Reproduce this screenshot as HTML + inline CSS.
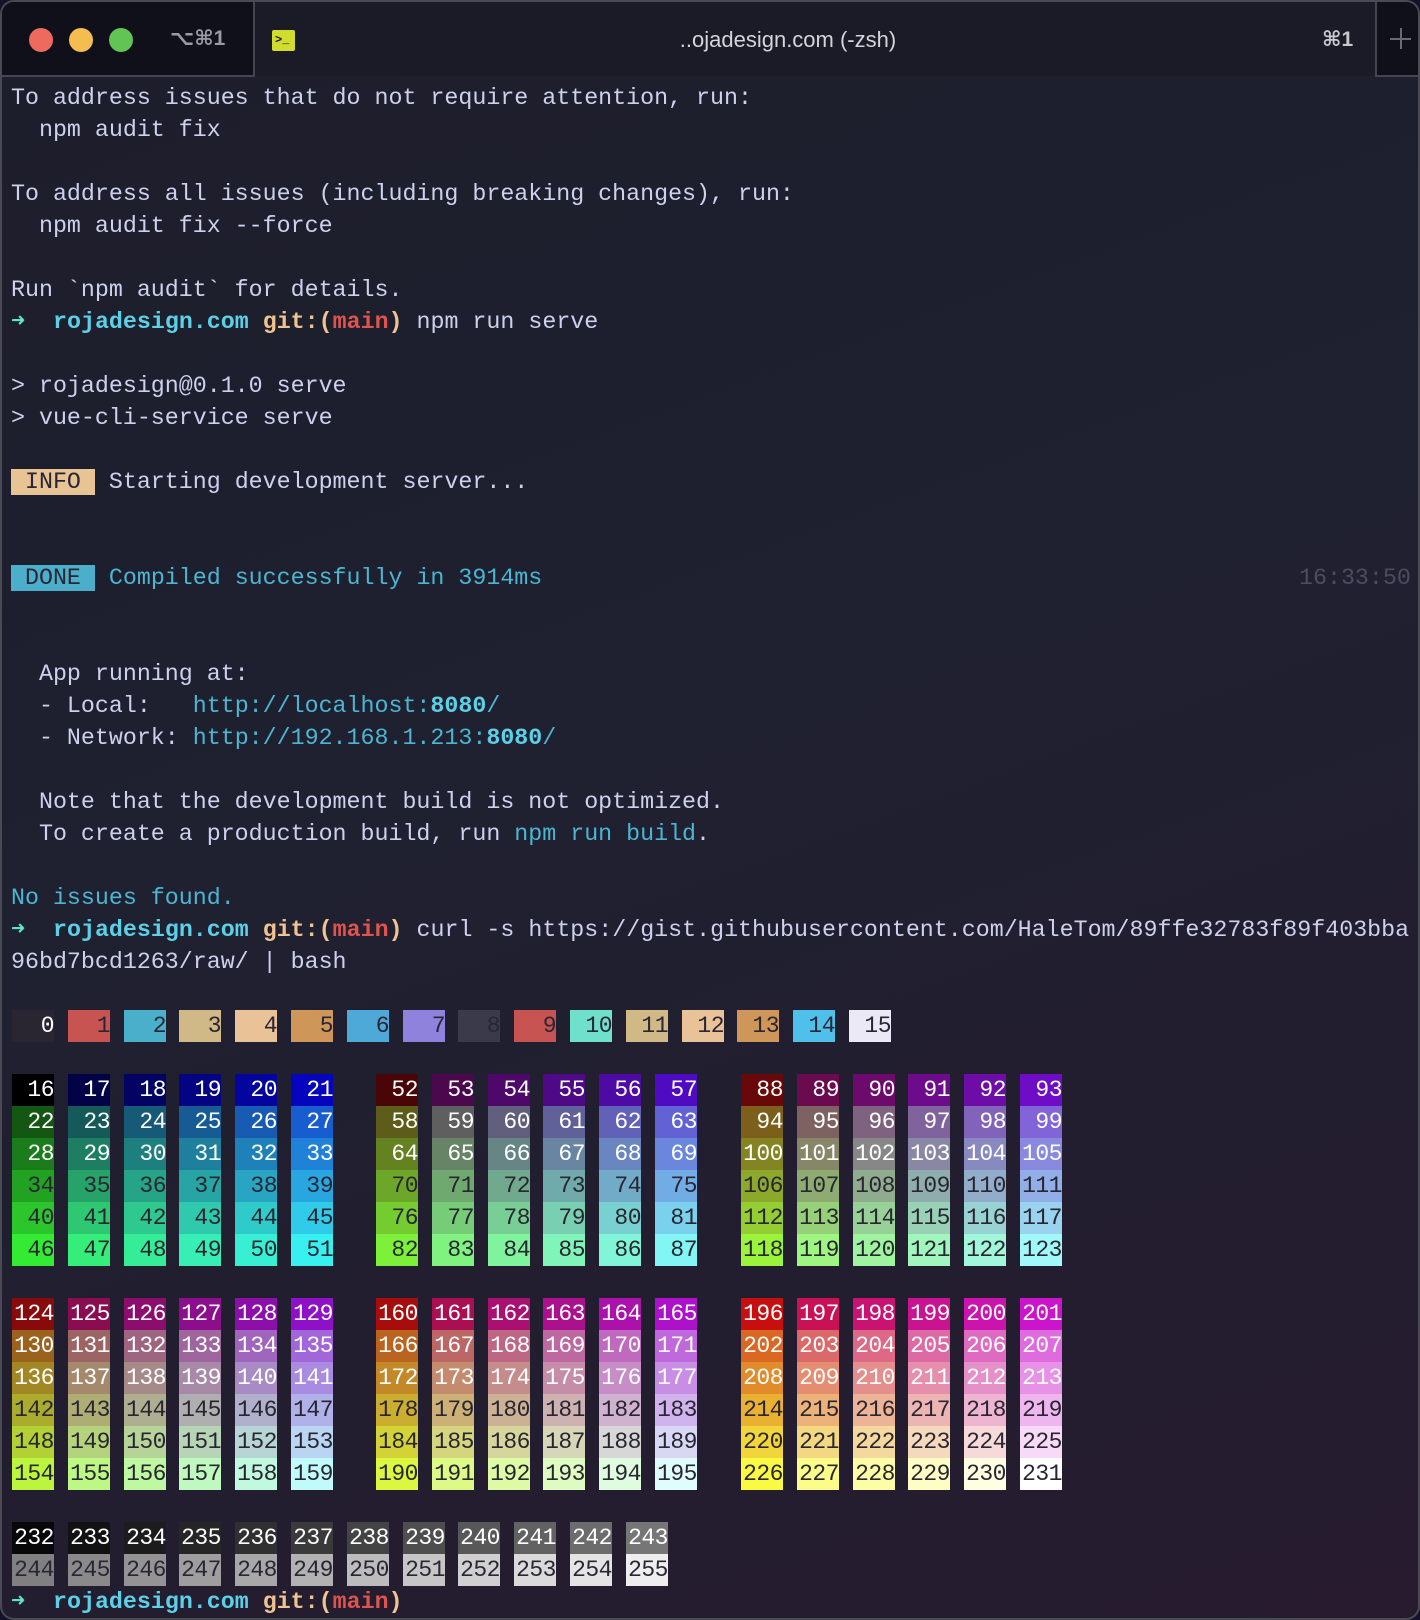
<!DOCTYPE html>
<html><head><meta charset="utf-8"><style>
*{margin:0;padding:0;box-sizing:border-box}
html,body{width:1420px;height:1620px;overflow:hidden;background:#14122a}
#win{position:absolute;left:0;top:0;width:1420px;height:1620px;border-radius:14px;overflow:hidden;
background:linear-gradient(160deg,#1d1e2b 0%,#1f2030 45%,#231d2f 80%,#281b2f 100%);border:2px solid #4a4a54}
#bar{position:absolute;left:0;top:0;width:1420px;height:74px;background:#1b1b27}
#ltab{position:absolute;left:0;top:0;width:253px;height:75px;background:#10101a;border-right:2px solid #45454f;border-bottom:2px solid #45454f}
.dot{position:absolute;top:26px;width:24px;height:24px;border-radius:50%}
#rtab{position:absolute;left:1373px;top:0;width:50px;height:75px;background:#10101a;border-left:2px solid #45454f;border-bottom:2px solid #45454f}
.sans{font-family:"Liberation Sans","DejaVu Sans",sans-serif}
.l{position:absolute;left:9px;white-space:pre;font-family:"Liberation Mono",monospace;font-size:23.3px;line-height:32px;height:32px;color:#cdd1ee}
.cy{color:#5cd0e6;font-weight:bold}
.gi{color:#f0c48e;font-weight:bold}
.mn{color:#e0544e;font-weight:bold}
.ar{color:#5ce6c6;font-weight:bold}
.tl{color:#4cb6d2}
.b{font-weight:bold}
i{position:absolute;width:42px;height:32px;font-style:normal;text-align:right;font-family:"Liberation Mono",monospace;font-size:23px;line-height:32px;color:#fff;letter-spacing:-0.5px}
.cube i{filter:saturate(0.72)}
.r0{top:1072px}.r1{top:1104px}.r2{top:1136px}.r3{top:1168px;color:#2a2535}.r4{top:1200px;color:#2a2535}.r5{top:1232px;color:#2a2535}
.r6{top:1296px}.r7{top:1328px}.r8{top:1360px}.r9{top:1392px;color:#2a2535}.r10{top:1424px;color:#2a2535}.r11{top:1456px;color:#2a2535}
.c0{left:10px}.c1{left:66px}.c2{left:122px}.c3{left:177px}.c4{left:233px}.c5{left:289px}
.c6{left:374px}.c7{left:430px}.c8{left:486px}.c9{left:541px}.c10{left:597px}.c11{left:653px}
.c12{left:739px}.c13{left:795px}.c14{left:851px}.c15{left:906px}.c16{left:962px}.c17{left:1018px}
.s{top:1008px;color:#2a2535}
.g1{top:1520px}.g2{top:1552px;color:#2a2535}
.x0{left:10px}.x1{left:66px}.x2{left:122px}.x3{left:177px}.x4{left:233px}.x5{left:289px}.x6{left:345px}.x7{left:401px}.x8{left:456px}.x9{left:512px}.x10{left:568px}.x11{left:624px}.x12{left:680px}.x13{left:735px}.x14{left:791px}.x15{left:847px}
</style></head><body>
<div id="win">
<div id="bar"></div>
<div id="ltab"></div>
<div class="dot" style="left:27px;background:#ee6a5e"></div>
<div class="dot" style="left:67px;background:#f5bd4f"></div>
<div class="dot" style="left:107px;background:#61c454"></div>
<div class="sans" style="position:absolute;left:168px;top:24px;font-size:21px;color:#9a9aa4;font-weight:bold">⌥⌘1</div>
<div style="position:absolute;left:270px;top:28px;width:23px;height:21px;background:#d2dc2c;border-radius:2px;font-family:'Liberation Mono',monospace;font-size:12px;font-weight:bold;color:#1b1b27;line-height:20px;padding-left:3px">&gt;_</div>
<div class="sans" style="position:absolute;left:600px;width:372px;text-align:center;top:25px;font-size:22px;color:#d4d4dc">..ojadesign.com (-zsh)</div>
<div class="sans" style="position:absolute;left:1320px;top:25px;font-size:21px;color:#c8c8d0;font-weight:bold">⌘1</div>
<div id="rtab"><div style="position:absolute;left:13px;top:36px;width:21px;height:2px;background:#6a6a74"></div><div style="position:absolute;left:23px;top:26px;width:2px;height:21px;background:#6a6a74"></div></div>

<div class="l" style="top:80px">To address issues that do not require attention, run:</div>
<div class="l" style="top:112px">  npm audit fix</div>
<div class="l" style="top:176px">To address all issues (including breaking changes), run:</div>
<div class="l" style="top:208px">  npm audit fix --force</div>
<div class="l" style="top:272px">Run `npm audit` for details.</div>
<div class="l" style="top:304px"><span class="ar">➜</span>  <span class="cy">rojadesign.com</span> <span class="gi">git:(</span><span class="mn">main</span><span class="gi">)</span> npm run serve</div>
<div class="l" style="top:368px">&gt; rojadesign@0.1.0 serve</div>
<div class="l" style="top:400px">&gt; vue-cli-service serve</div>
<div class="l" style="top:464px"><span style="background:#e8c393;color:#2a2535"> INFO </span> Starting development server...</div>
<div class="l" style="top:560px"><span style="background:#4bafcb;color:#2a2535"> DONE </span> <span class="tl">Compiled successfully in 3914ms</span></div>
<div class="l" style="top:560px;left:1297px;color:#4a4e60">16:33:50</div>
<div class="l" style="top:656px">  App running at:</div>
<div class="l" style="top:688px">  - Local:   <span class="tl">http://localhost:<b style="color:#5cd0e6">8080</b>/</span></div>
<div class="l" style="top:720px">  - Network: <span class="tl">http://192.168.1.213:<b style="color:#5cd0e6">8080</b>/</span></div>
<div class="l" style="top:784px">  Note that the development build is not optimized.</div>
<div class="l" style="top:816px">  To create a production build, run <span class="tl">npm run build</span>.</div>
<div class="l tl" style="top:880px">No issues found.</div>
<div class="l" style="top:912px"><span class="ar">➜</span>  <span class="cy">rojadesign.com</span> <span class="gi">git:(</span><span class="mn">main</span><span class="gi">)</span> curl -s https://gist.githubusercontent.com/HaleTom/89ffe32783f89f403bba</div>
<div class="l" style="top:944px">96bd7bcd1263/raw/ | bash</div>
<div class="l" style="top:1584px"><span class="ar">➜</span>  <span class="cy">rojadesign.com</span> <span class="gi">git:(</span><span class="mn">main</span><span class="gi">)</span></div>

<i class="s x0" style="background:#292631;color:#fff">0</i>
<i class="s x1" style="background:#c75450">1</i>
<i class="s x2" style="background:#4aafcb">2</i>
<i class="s x3" style="background:#d0b987">3</i>
<i class="s x4" style="background:#e9c397">4</i>
<i class="s x5" style="background:#cf9659">5</i>
<i class="s x6" style="background:#4ea8d8">6</i>
<i class="s x7" style="background:#8f82dc">7</i>
<i class="s x8" style="background:#3b3a4b">8</i>
<i class="s x9" style="background:#c75450">9</i>
<i class="s x10" style="background:#6fe0cc">10</i>
<i class="s x11" style="background:#d0b987">11</i>
<i class="s x12" style="background:#e9c397">12</i>
<i class="s x13" style="background:#cf9659">13</i>
<i class="s x14" style="background:#4fc0ea">14</i>
<i class="s x15" style="background:#ebe9f5">15</i>

<div class="cube">
<i class="r0 c0" style="background:#000000">16</i><i class="r0 c1" style="background:#00005f">17</i><i class="r0 c2" style="background:#000087">18</i><i class="r0 c3" style="background:#0000af">19</i><i class="r0 c4" style="background:#0000d7">20</i><i class="r0 c5" style="background:#0000ff">21</i>
<i class="r1 c0" style="background:#005f00">22</i><i class="r1 c1" style="background:#005f5f">23</i><i class="r1 c2" style="background:#005f87">24</i><i class="r1 c3" style="background:#005faf">25</i><i class="r1 c4" style="background:#005fd7">26</i><i class="r1 c5" style="background:#005fff">27</i>
<i class="r2 c0" style="background:#008700">28</i><i class="r2 c1" style="background:#00875f">29</i><i class="r2 c2" style="background:#008787">30</i><i class="r2 c3" style="background:#0087af">31</i><i class="r2 c4" style="background:#0087d7">32</i><i class="r2 c5" style="background:#0087ff">33</i>
<i class="r3 c0" style="background:#00af00">34</i><i class="r3 c1" style="background:#00af5f">35</i><i class="r3 c2" style="background:#00af87">36</i><i class="r3 c3" style="background:#00afaf">37</i><i class="r3 c4" style="background:#00afd7">38</i><i class="r3 c5" style="background:#00afff">39</i>
<i class="r4 c0" style="background:#00d700">40</i><i class="r4 c1" style="background:#00d75f">41</i><i class="r4 c2" style="background:#00d787">42</i><i class="r4 c3" style="background:#00d7af">43</i><i class="r4 c4" style="background:#00d7d7">44</i><i class="r4 c5" style="background:#00d7ff">45</i>
<i class="r5 c0" style="background:#00ff00">46</i><i class="r5 c1" style="background:#00ff5f">47</i><i class="r5 c2" style="background:#00ff87">48</i><i class="r5 c3" style="background:#00ffaf">49</i><i class="r5 c4" style="background:#00ffd7">50</i><i class="r5 c5" style="background:#00ffff">51</i>

<i class="r0 c6" style="background:#5f0000">52</i><i class="r0 c7" style="background:#5f005f">53</i><i class="r0 c8" style="background:#5f0087">54</i><i class="r0 c9" style="background:#5f00af">55</i><i class="r0 c10" style="background:#5f00d7">56</i><i class="r0 c11" style="background:#5f00ff">57</i>
<i class="r1 c6" style="background:#5f5f00">58</i><i class="r1 c7" style="background:#5f5f5f">59</i><i class="r1 c8" style="background:#5f5f87">60</i><i class="r1 c9" style="background:#5f5faf">61</i><i class="r1 c10" style="background:#5f5fd7">62</i><i class="r1 c11" style="background:#5f5fff">63</i>
<i class="r2 c6" style="background:#5f8700">64</i><i class="r2 c7" style="background:#5f875f">65</i><i class="r2 c8" style="background:#5f8787">66</i><i class="r2 c9" style="background:#5f87af">67</i><i class="r2 c10" style="background:#5f87d7">68</i><i class="r2 c11" style="background:#5f87ff">69</i>
<i class="r3 c6" style="background:#5faf00">70</i><i class="r3 c7" style="background:#5faf5f">71</i><i class="r3 c8" style="background:#5faf87">72</i><i class="r3 c9" style="background:#5fafaf">73</i><i class="r3 c10" style="background:#5fafd7">74</i><i class="r3 c11" style="background:#5fafff">75</i>
<i class="r4 c6" style="background:#5fd700">76</i><i class="r4 c7" style="background:#5fd75f">77</i><i class="r4 c8" style="background:#5fd787">78</i><i class="r4 c9" style="background:#5fd7af">79</i><i class="r4 c10" style="background:#5fd7d7">80</i><i class="r4 c11" style="background:#5fd7ff">81</i>
<i class="r5 c6" style="background:#5fff00">82</i><i class="r5 c7" style="background:#5fff5f">83</i><i class="r5 c8" style="background:#5fff87">84</i><i class="r5 c9" style="background:#5fffaf">85</i><i class="r5 c10" style="background:#5fffd7">86</i><i class="r5 c11" style="background:#5fffff">87</i>

<i class="r0 c12" style="background:#870000">88</i><i class="r0 c13" style="background:#87005f">89</i><i class="r0 c14" style="background:#870087">90</i><i class="r0 c15" style="background:#8700af">91</i><i class="r0 c16" style="background:#8700d7">92</i><i class="r0 c17" style="background:#8700ff">93</i>
<i class="r1 c12" style="background:#875f00">94</i><i class="r1 c13" style="background:#875f5f">95</i><i class="r1 c14" style="background:#875f87">96</i><i class="r1 c15" style="background:#875faf">97</i><i class="r1 c16" style="background:#875fd7">98</i><i class="r1 c17" style="background:#875fff">99</i>
<i class="r2 c12" style="background:#878700">100</i><i class="r2 c13" style="background:#87875f">101</i><i class="r2 c14" style="background:#878787">102</i><i class="r2 c15" style="background:#8787af">103</i><i class="r2 c16" style="background:#8787d7">104</i><i class="r2 c17" style="background:#8787ff">105</i>
<i class="r3 c12" style="background:#87af00">106</i><i class="r3 c13" style="background:#87af5f">107</i><i class="r3 c14" style="background:#87af87">108</i><i class="r3 c15" style="background:#87afaf">109</i><i class="r3 c16" style="background:#87afd7">110</i><i class="r3 c17" style="background:#87afff">111</i>
<i class="r4 c12" style="background:#87d700">112</i><i class="r4 c13" style="background:#87d75f">113</i><i class="r4 c14" style="background:#87d787">114</i><i class="r4 c15" style="background:#87d7af">115</i><i class="r4 c16" style="background:#87d7d7">116</i><i class="r4 c17" style="background:#87d7ff">117</i>
<i class="r5 c12" style="background:#87ff00">118</i><i class="r5 c13" style="background:#87ff5f">119</i><i class="r5 c14" style="background:#87ff87">120</i><i class="r5 c15" style="background:#87ffaf">121</i><i class="r5 c16" style="background:#87ffd7">122</i><i class="r5 c17" style="background:#87ffff">123</i>

<i class="r6 c0" style="background:#af0000">124</i><i class="r6 c1" style="background:#af005f">125</i><i class="r6 c2" style="background:#af0087">126</i><i class="r6 c3" style="background:#af00af">127</i><i class="r6 c4" style="background:#af00d7">128</i><i class="r6 c5" style="background:#af00ff">129</i>
<i class="r7 c0" style="background:#af5f00">130</i><i class="r7 c1" style="background:#af5f5f">131</i><i class="r7 c2" style="background:#af5f87">132</i><i class="r7 c3" style="background:#af5faf">133</i><i class="r7 c4" style="background:#af5fd7">134</i><i class="r7 c5" style="background:#af5fff">135</i>
<i class="r8 c0" style="background:#af8700">136</i><i class="r8 c1" style="background:#af875f">137</i><i class="r8 c2" style="background:#af8787">138</i><i class="r8 c3" style="background:#af87af">139</i><i class="r8 c4" style="background:#af87d7">140</i><i class="r8 c5" style="background:#af87ff">141</i>
<i class="r9 c0" style="background:#afaf00">142</i><i class="r9 c1" style="background:#afaf5f">143</i><i class="r9 c2" style="background:#afaf87">144</i><i class="r9 c3" style="background:#afafaf">145</i><i class="r9 c4" style="background:#afafd7">146</i><i class="r9 c5" style="background:#afafff">147</i>
<i class="r10 c0" style="background:#afd700">148</i><i class="r10 c1" style="background:#afd75f">149</i><i class="r10 c2" style="background:#afd787">150</i><i class="r10 c3" style="background:#afd7af">151</i><i class="r10 c4" style="background:#afd7d7">152</i><i class="r10 c5" style="background:#afd7ff">153</i>
<i class="r11 c0" style="background:#afff00">154</i><i class="r11 c1" style="background:#afff5f">155</i><i class="r11 c2" style="background:#afff87">156</i><i class="r11 c3" style="background:#afffaf">157</i><i class="r11 c4" style="background:#afffd7">158</i><i class="r11 c5" style="background:#afffff">159</i>

<i class="r6 c6" style="background:#d70000">160</i><i class="r6 c7" style="background:#d7005f">161</i><i class="r6 c8" style="background:#d70087">162</i><i class="r6 c9" style="background:#d700af">163</i><i class="r6 c10" style="background:#d700d7">164</i><i class="r6 c11" style="background:#d700ff">165</i>
<i class="r7 c6" style="background:#d75f00">166</i><i class="r7 c7" style="background:#d75f5f">167</i><i class="r7 c8" style="background:#d75f87">168</i><i class="r7 c9" style="background:#d75faf">169</i><i class="r7 c10" style="background:#d75fd7">170</i><i class="r7 c11" style="background:#d75fff">171</i>
<i class="r8 c6" style="background:#d78700">172</i><i class="r8 c7" style="background:#d7875f">173</i><i class="r8 c8" style="background:#d78787">174</i><i class="r8 c9" style="background:#d787af">175</i><i class="r8 c10" style="background:#d787d7">176</i><i class="r8 c11" style="background:#d787ff">177</i>
<i class="r9 c6" style="background:#d7af00">178</i><i class="r9 c7" style="background:#d7af5f">179</i><i class="r9 c8" style="background:#d7af87">180</i><i class="r9 c9" style="background:#d7afaf">181</i><i class="r9 c10" style="background:#d7afd7">182</i><i class="r9 c11" style="background:#d7afff">183</i>
<i class="r10 c6" style="background:#d7d700">184</i><i class="r10 c7" style="background:#d7d75f">185</i><i class="r10 c8" style="background:#d7d787">186</i><i class="r10 c9" style="background:#d7d7af">187</i><i class="r10 c10" style="background:#d7d7d7">188</i><i class="r10 c11" style="background:#d7d7ff">189</i>
<i class="r11 c6" style="background:#d7ff00">190</i><i class="r11 c7" style="background:#d7ff5f">191</i><i class="r11 c8" style="background:#d7ff87">192</i><i class="r11 c9" style="background:#d7ffaf">193</i><i class="r11 c10" style="background:#d7ffd7">194</i><i class="r11 c11" style="background:#d7ffff">195</i>

<i class="r6 c12" style="background:#ff0000">196</i><i class="r6 c13" style="background:#ff005f">197</i><i class="r6 c14" style="background:#ff0087">198</i><i class="r6 c15" style="background:#ff00af">199</i><i class="r6 c16" style="background:#ff00d7">200</i><i class="r6 c17" style="background:#ff00ff">201</i>
<i class="r7 c12" style="background:#ff5f00">202</i><i class="r7 c13" style="background:#ff5f5f">203</i><i class="r7 c14" style="background:#ff5f87">204</i><i class="r7 c15" style="background:#ff5faf">205</i><i class="r7 c16" style="background:#ff5fd7">206</i><i class="r7 c17" style="background:#ff5fff">207</i>
<i class="r8 c12" style="background:#ff8700">208</i><i class="r8 c13" style="background:#ff875f">209</i><i class="r8 c14" style="background:#ff8787">210</i><i class="r8 c15" style="background:#ff87af">211</i><i class="r8 c16" style="background:#ff87d7">212</i><i class="r8 c17" style="background:#ff87ff">213</i>
<i class="r9 c12" style="background:#ffaf00">214</i><i class="r9 c13" style="background:#ffaf5f">215</i><i class="r9 c14" style="background:#ffaf87">216</i><i class="r9 c15" style="background:#ffafaf">217</i><i class="r9 c16" style="background:#ffafd7">218</i><i class="r9 c17" style="background:#ffafff">219</i>
<i class="r10 c12" style="background:#ffd700">220</i><i class="r10 c13" style="background:#ffd75f">221</i><i class="r10 c14" style="background:#ffd787">222</i><i class="r10 c15" style="background:#ffd7af">223</i><i class="r10 c16" style="background:#ffd7d7">224</i><i class="r10 c17" style="background:#ffd7ff">225</i>
<i class="r11 c12" style="background:#ffff00">226</i><i class="r11 c13" style="background:#ffff5f">227</i><i class="r11 c14" style="background:#ffff87">228</i><i class="r11 c15" style="background:#ffffaf">229</i><i class="r11 c16" style="background:#ffffd7">230</i><i class="r11 c17" style="background:#ffffff">231</i>
</div>

<i class="g1 x0" style="background:#080808">232</i><i class="g1 x1" style="background:#121212">233</i><i class="g1 x2" style="background:#1c1c1c">234</i><i class="g1 x3" style="background:#262626">235</i><i class="g1 x4" style="background:#303030">236</i><i class="g1 x5" style="background:#3a3a3a">237</i><i class="g1 x6" style="background:#444444">238</i><i class="g1 x7" style="background:#4e4e4e">239</i><i class="g1 x8" style="background:#585858">240</i><i class="g1 x9" style="background:#626262">241</i><i class="g1 x10" style="background:#6c6c6c">242</i><i class="g1 x11" style="background:#767676">243</i>
<i class="g2 x0" style="background:#808080">244</i><i class="g2 x1" style="background:#8a8a8a">245</i><i class="g2 x2" style="background:#949494">246</i><i class="g2 x3" style="background:#9e9e9e">247</i><i class="g2 x4" style="background:#a8a8a8">248</i><i class="g2 x5" style="background:#b2b2b2">249</i><i class="g2 x6" style="background:#bcbcbc">250</i><i class="g2 x7" style="background:#c6c6c6">251</i><i class="g2 x8" style="background:#d0d0d0">252</i><i class="g2 x9" style="background:#dadada">253</i><i class="g2 x10" style="background:#e4e4e4">254</i><i class="g2 x11" style="background:#eeeeee">255</i>
</div>
</body></html>
